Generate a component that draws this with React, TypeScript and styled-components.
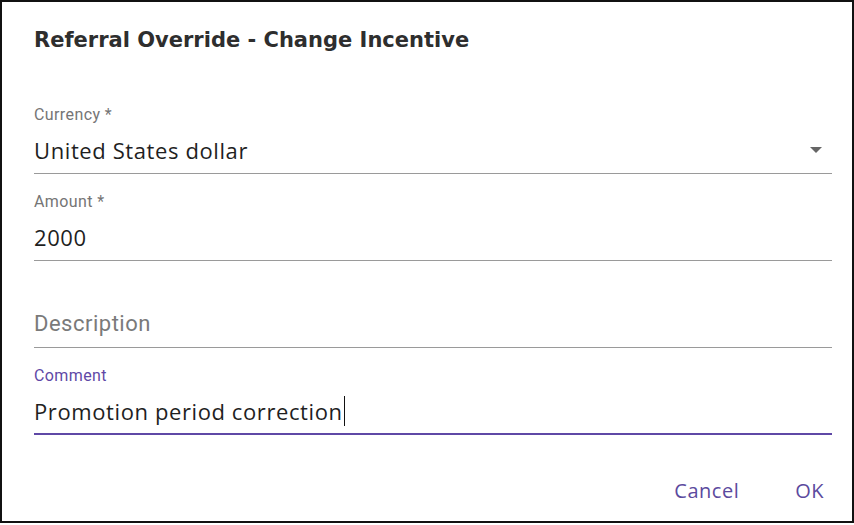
import React from 'react';
import { styled, createGlobalStyle } from 'styled-components';

const GlobalStyle = createGlobalStyle`
  html, body {
    margin: 0;
    padding: 0;
    background: #ffffff;
  }
`;

const Dialog = styled.div`
  box-sizing: border-box;
  width: 854px;
  height: 523px;
  border: 2px solid #111111;
  background: #ffffff;
  padding: 24px 20px 0 32px;
  display: flex;
  flex-direction: column;
`;

const Title = styled.h2`
  margin: 0 0 52px 0;
  font-family: 'DejaVu Sans', 'Open Sans', sans-serif;
  font-weight: 700;
  font-size: 21px;
  line-height: 28px;
  color: #2e2e2e;
`;

const Form = styled.div`
  display: flex;
  flex-direction: column;
  gap: 19px;
`;

const Field = styled.div`
  display: flex;
  flex-direction: column;
`;

const Label = styled.label<{ $focused?: boolean }>`
  font-family: Roboto, sans-serif;
  font-size: 16px;
  letter-spacing: 0.4px;
  line-height: 18px;
  height: 18px;
  margin-bottom: 10px;
  color: ${(p) => (p.$focused ? '#5f48a6' : '#757575')};
`;

const ValueRow = styled.div<{ $focused?: boolean }>`
  display: flex;
  align-items: center;
  justify-content: space-between;
  height: 32px;
  padding-bottom: ${(p) => (p.$focused ? '6px' : '7px')};
  border-bottom: ${(p) => (p.$focused ? '2px solid #5f48a6' : '1px solid #9a9a9a')};
`;

const Value = styled.span`
  font-family: 'Open Sans', sans-serif;
  font-size: 22px;
  letter-spacing: 0.6px;
  line-height: 32px;
  color: #1f1f1f;
  display: flex;
  align-items: center;
`;

const Placeholder = styled.span`
  font-family: Roboto, sans-serif;
  font-size: 22px;
  letter-spacing: 0.5px;
  line-height: 32px;
  color: #7a7a7a;
`;

const Caret = styled.span`
  display: inline-block;
  width: 0;
  height: 30px;
  border-left: 1.5px solid #111111;
  margin-left: 1px;
`;

const DropArrow = styled.span`
  width: 0;
  height: 0;
  margin-right: 10px;
  border-left: 6.5px solid transparent;
  border-right: 6.5px solid transparent;
  border-top: 6px solid #666666;
`;

const ButtonRow = styled.div`
  display: flex;
  justify-content: flex-end;
  gap: 40px;
  margin-top: 37px;
`;

const TextButton = styled.button`
  background: none;
  border: none;
  padding: 6px 8px;
  font-family: 'Open Sans', sans-serif;
  font-size: 20px;
  letter-spacing: 0.5px;
  line-height: 26px;
  color: #5b4a9e;
  cursor: pointer;
`;

export default function App() {
  return (
    <>
      <GlobalStyle />
      <Dialog>
        <Title>Referral Override - Change Incentive</Title>
        <Form>
          <Field>
            <Label>Currency *</Label>
            <ValueRow>
              <Value>United States dollar</Value>
              <DropArrow />
            </ValueRow>
          </Field>
          <Field>
            <Label>Amount *</Label>
            <ValueRow>
              <Value>2000</Value>
            </ValueRow>
          </Field>
          <Field>
            <Label />
            <ValueRow>
              <Placeholder>Description</Placeholder>
            </ValueRow>
          </Field>
          <Field>
            <Label $focused>Comment</Label>
            <ValueRow $focused>
              <Value>
                Promotion period correction
                <Caret />
              </Value>
            </ValueRow>
          </Field>
        </Form>
        <ButtonRow>
          <TextButton>Cancel</TextButton>
          <TextButton>OK</TextButton>
        </ButtonRow>
      </Dialog>
    </>
  );
}
